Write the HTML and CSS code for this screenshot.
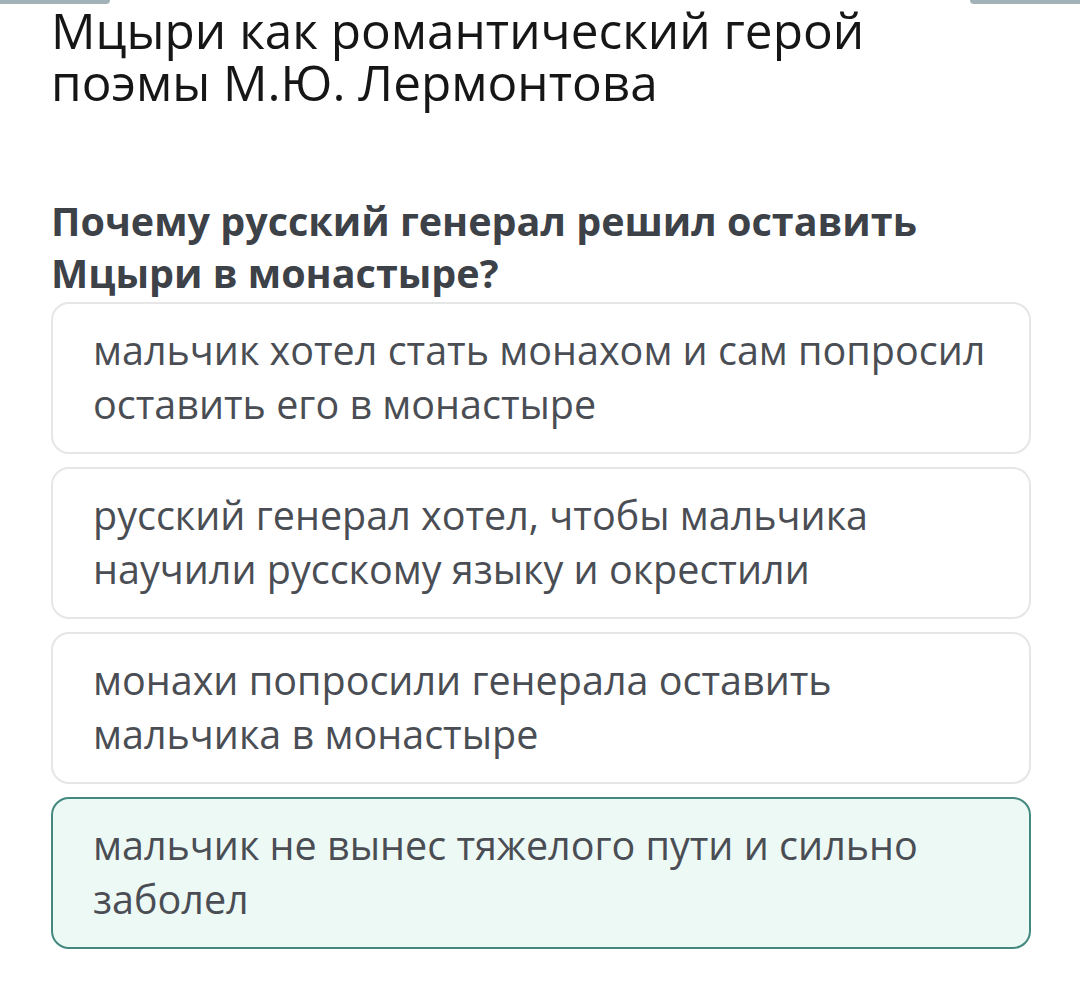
FILE: index.html
```html
<!DOCTYPE html>
<html lang="ru">
<head>
  <meta charset="UTF-8">
  <title>Мцыри</title>
  <link rel="stylesheet" href="styles.css">
</head>
<body>

  <!-- кнопки сверху, обрезаны -->
  <div class="top-tabs">
    <div class="tab"></div>
    <div class="tab"></div>
  </div>

  <div class="page">
    <h1 class="title">Мцыри как романтический герой поэмы М.Ю. Лермонтова</h1>

    <h2 class="question">Почему русский генерал решил оставить Мцыри в монастыре?</h2>

    <div class="answers">
      <div class="answer">мальчик хотел стать монахом и сам попросил оставить его в монастыре</div>
      <div class="answer">русский генерал хотел, чтобы мальчика научили русскому языку и окрестили</div>
      <div class="answer">монахи попросили генерала оставить мальчика в монастыре</div>
      <div class="answer selected">мальчик не вынес тяжелого пути и сильно заболел</div>
    </div>
  </div>

</body>
</html>
```

FILE: styles.css
```css
body {
  margin: 0;
  padding: 0;
  background: #fff;
  font-family: 'Open Sans', 'Noto Sans', sans-serif;
  width: 1080px;
  height: 994px;
  overflow: hidden;
}

.top-tabs {
  display: flex;
  justify-content: space-between;
  height: 4px;
}

.tab {
  width: 110px;
  height: 4px;
  background: #a3b1b8;
}

.tab:first-child {
  border-bottom-right-radius: 6px;
}

.tab:last-child {
  border-bottom-left-radius: 6px;
}

.page {
  padding: 0 49px 0 51px;
}

.title {
  margin: 0;
  font-weight: 400;
  font-size: 49.5px;
  line-height: 52px;
  color: #161616;
  width: 900px;
}

.question {
  margin: 87px 0 3px;
  font-weight: 700;
  font-size: 39.5px;
  line-height: 52px;
  color: #3d4148;
}

.answers {
  display: flex;
  flex-direction: column;
  gap: 13px;
}

.answer {
  border: 2px solid #e6e6e6;
  border-radius: 18px;
  padding: 19px 40px 21px;
  font-size: 39.5px;
  line-height: 54px;
  color: #4a4e54;
}

.answer.selected {
  background: #edf9f4;
  border-color: #43897f;
}
```
